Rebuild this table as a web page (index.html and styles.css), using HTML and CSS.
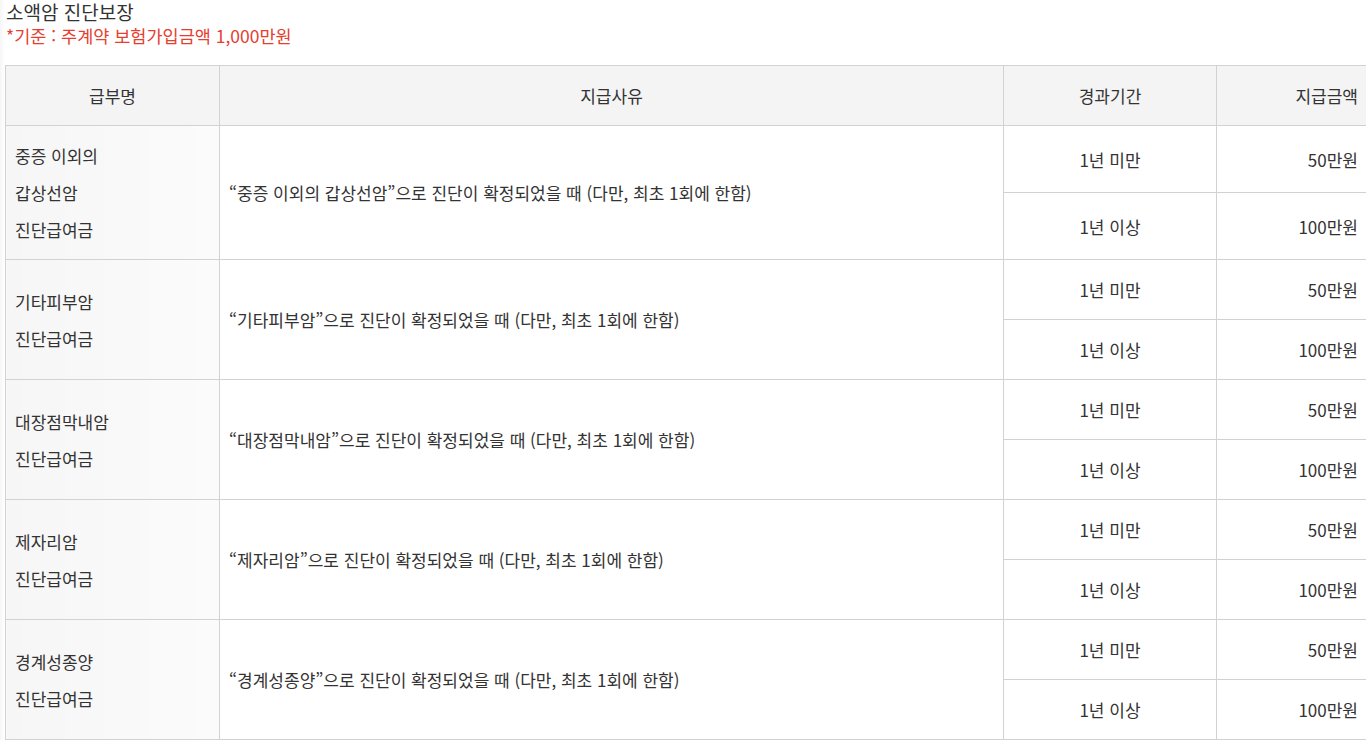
FILE: index.html
```html
<!DOCTYPE html>
<html lang="ko">
<head>
    <meta charset="UTF-8">
    <meta name="viewport" content="width=device-width, initial-scale=1.0">
    <title>소액암 진단보장</title>
    <link rel="stylesheet" href="styles.css">
</head>
<body>

    <div class="wrap">
        <h3 class="title">소액암 진단보장</h3>
        <p class="note">*기준 : 주계약 보험가입금액 1,000만원</p>

        <table class="benefit">
            <colgroup>
                <col class="c-name">
                <col class="c-reason">
                <col class="c-period">
                <col class="c-amount">
            </colgroup>
            <thead>
                <tr>
                    <th>급부명</th>
                    <th>지급사유</th>
                    <th>경과기간</th>
                    <th class="amount">지급금액</th>
                </tr>
            </thead>
            <tbody>
                <!-- 갑상선암 -->
                <tr class="tall">
                    <td rowspan="2" class="name">중증 이외의<br>갑상선암<br>진단급여금</td>
                    <td rowspan="2" class="reason">“중증 이외의 갑상선암”으로 진단이 확정되었을 때 (다만, 최초 1회에 한함)</td>
                    <td class="period">1년 미만</td>
                    <td class="amount">50만원</td>
                </tr>
                <tr class="tall">
                    <td class="period">1년 이상</td>
                    <td class="amount">100만원</td>
                </tr>

                <!-- 기타피부암 -->
                <tr>
                    <td rowspan="2" class="name">기타피부암<br>진단급여금</td>
                    <td rowspan="2" class="reason">“기타피부암”으로 진단이 확정되었을 때 (다만, 최초 1회에 한함)</td>
                    <td class="period">1년 미만</td>
                    <td class="amount">50만원</td>
                </tr>
                <tr>
                    <td class="period">1년 이상</td>
                    <td class="amount">100만원</td>
                </tr>

                <!-- 대장점막내암 -->
                <tr>
                    <td rowspan="2" class="name">대장점막내암<br>진단급여금</td>
                    <td rowspan="2" class="reason">“대장점막내암”으로 진단이 확정되었을 때 (다만, 최초 1회에 한함)</td>
                    <td class="period">1년 미만</td>
                    <td class="amount">50만원</td>
                </tr>
                <tr>
                    <td class="period">1년 이상</td>
                    <td class="amount">100만원</td>
                </tr>

                <!-- 제자리암 -->
                <tr>
                    <td rowspan="2" class="name">제자리암<br>진단급여금</td>
                    <td rowspan="2" class="reason">“제자리암”으로 진단이 확정되었을 때 (다만, 최초 1회에 한함)</td>
                    <td class="period">1년 미만</td>
                    <td class="amount">50만원</td>
                </tr>
                <tr>
                    <td class="period">1년 이상</td>
                    <td class="amount">100만원</td>
                </tr>

                <!-- 경계성종양 -->
                <tr>
                    <td rowspan="2" class="name">경계성종양<br>진단급여금</td>
                    <td rowspan="2" class="reason">“경계성종양”으로 진단이 확정되었을 때 (다만, 최초 1회에 한함)</td>
                    <td class="period">1년 미만</td>
                    <td class="amount">50만원</td>
                </tr>
                <tr>
                    <td class="period">1년 이상</td>
                    <td class="amount">100만원</td>
                </tr>
            </tbody>
        </table>
    </div>

</body>
</html>
```

FILE: styles.css
```css
html, body {
    margin: 0;
    padding: 0;
    overflow: hidden;
}
body {
    font-family: "Noto Sans CJK KR", "Noto Sans", sans-serif;
    color: #333;
    background: #fff;
}
.wrap {
    padding: 0 0 0 5px;
    width: 1400px;
    background: linear-gradient(to right, #f6f6f6 0, #fff 5px);
}
.title {
    margin: 0 0 0 1px;
    font-size: 19px;
    font-weight: normal;
    line-height: 24px;
    color: #333;
}
.note {
    margin: 0 0 17px 1px;
    font-size: 17.5px;
    line-height: 24px;
    color: #e5402f;
}
.benefit {
    border-collapse: collapse;
    table-layout: fixed;
    width: 1362px;
    font-size: 17px;
    border: 1px solid #cfcfcf;
}
.c-name { width: 214px; }
.c-reason { width: 784px; }
.c-period { width: 213px; }
.c-amount { width: 151px; }
.benefit th,
.benefit td {
    border: 1px solid #d2d2d2;
    padding: 0 10px;
    height: 59px;
    vertical-align: middle;
}
.benefit th {
    background: #f4f4f4;
    font-weight: normal;
    text-align: center;
}
.benefit tr.tall td {
    height: 66px;
}
.benefit td.name {
    background: linear-gradient(to right, #f6f6f6, #fbfbfb);
    text-align: left;
    padding-left: 9px;
    line-height: 37px;
}
.benefit td.reason {
    text-align: left;
    padding-left: 9px;
}
.benefit td.period {
    text-align: center;
}
.benefit .amount {
    text-align: right;
    padding-right: 9px;
}
```
